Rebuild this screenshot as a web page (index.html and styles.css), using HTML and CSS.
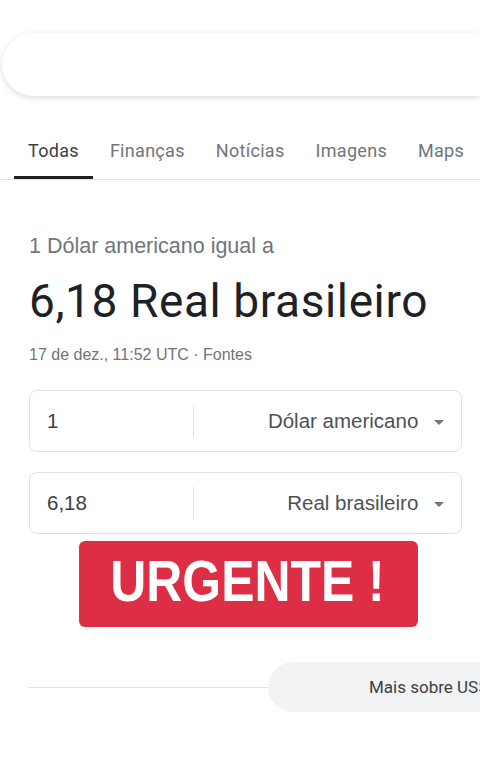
FILE: index.html
```html
<!DOCTYPE html>
<html lang="pt-BR">
<head>
    <meta charset="UTF-8">
    <meta name="viewport" content="width=device-width, initial-scale=1.0">
    <title>1 dólar em real</title>
    <link rel="stylesheet" href="styles.css">
</head>
<body>
<div class="page">
    <div class="search-bar"></div>

    <div class="tabs">
        <div class="tab active">Todas</div>
        <div class="tab">Finanças</div>
        <div class="tab">Notícias</div>
        <div class="tab">Imagens</div>
        <div class="tab">Maps</div>
    </div>

    <div class="converter">
        <div class="from-line">1 Dólar americano igual a</div>
        <div class="result">6,18 Real brasileiro</div>
        <div class="date-line">17 de dez., 11:52 UTC · Fontes</div>

        <div class="field">
            <div class="field-value">1</div>
            <div class="field-sep"></div>
            <div class="field-unit">Dólar americano <span class="caret"></span></div>
        </div>
        <div class="field">
            <div class="field-value">6,18</div>
            <div class="field-sep"></div>
            <div class="field-unit">Real brasileiro <span class="caret"></span></div>
        </div>

        <div class="urgent"><span class="urgent-text">URGENTE !</span></div>
    </div>

    <div class="more-row">
        <div class="more-line"></div>
        <div class="more-pill">Mais sobre US$</div>
    </div>
</div>
</body>
</html>
```

FILE: styles.css
```css
*{
    box-sizing:border-box;
}
body{
    margin:0;
    background:#fff;
    font-family:"Liberation Sans", Arial, sans-serif;
    overflow:hidden;
}
.page{
    width:480px;
    height:760px;
    overflow:hidden;
}

.search-bar{
    margin:33px 0 0 2px;
    height:63px;
    border-radius:32px 0 0 32px;
    background:#fff;
    box-shadow:0 2px 6px rgba(60,64,67,.18);
}

.tabs{
    display:flex;
    margin-top:29px;
    padding-left:14px;
    border-bottom:1px solid #e4e5e7;
    font-family:Roboto, sans-serif;
    font-size:18px;
    letter-spacing:0.3px;
    color:#70757a;
}
.tab{
    padding:15px 14px 15px;
    margin-right:3px;
    white-space:nowrap;
    border-bottom:3px solid transparent;
}
.tab.active{
    color:#3c4043;
    border-bottom-color:#202124;
}

.converter{
    position:relative;
    padding:54px 18px 0 29px;
}
.from-line{
    font-size:21.5px;
    line-height:24px;
    color:#70757a;
}
.result{
    margin-top:15px;
    font-family:Roboto, sans-serif;
    font-size:46px;
    letter-spacing:0.6px;
    color:#202124;
    line-height:56px;
}
.date-line{
    margin-top:17px;
    font-size:16px;
    line-height:18px;
    color:#70757a;
}

.field{
    display:flex;
    align-items:center;
    height:62px;
    margin-top:26px;
    border:1px solid #dfe1e5;
    border-radius:8px;
    font-size:20.5px;
    color:#3c4043;
}
.field + .field{
    margin-top:20px;
}
.field-value{
    width:163px;
    padding-left:17px;
}
.field-sep{
    width:1px;
    height:32px;
    background:#dfe1e5;
}
.field-unit{
    flex:1;
    text-align:right;
    padding-right:17px;
    color:#4d5156;
}
.caret{
    display:inline-block;
    margin-left:10px;
    vertical-align:middle;
    border-left:5px solid transparent;
    border-right:5px solid transparent;
    border-top:5px solid #70757a;
}

.urgent{
    position:absolute;
    left:79px;
    top:361px;
    width:339px;
    height:86px;
    border-radius:6px;
    background:#dd2e45;
    color:#fff;
    font-weight:bold;
    font-size:58px;
    line-height:80px;
    text-align:center;
}
.urgent-text{
    display:inline-block;
    transform:scaleX(0.86);
    margin-left:-3px;
}

.more-row{
    display:flex;
    align-items:center;
    margin-top:128px;
    padding-left:28px;
}
.more-line{
    flex:none;
    width:240px;
    height:1px;
    background:#dfe1e5;
}
.more-pill{
    flex:none;
    width:212px;
    height:50px;
    border-radius:25px 0 0 25px;
    background:#f1f3f4;
    font-family:Roboto, sans-serif;
    font-size:17px;
    color:#3c4043;
    line-height:50px;
    padding-left:101px;
    white-space:nowrap;
    overflow:hidden;
}
```
